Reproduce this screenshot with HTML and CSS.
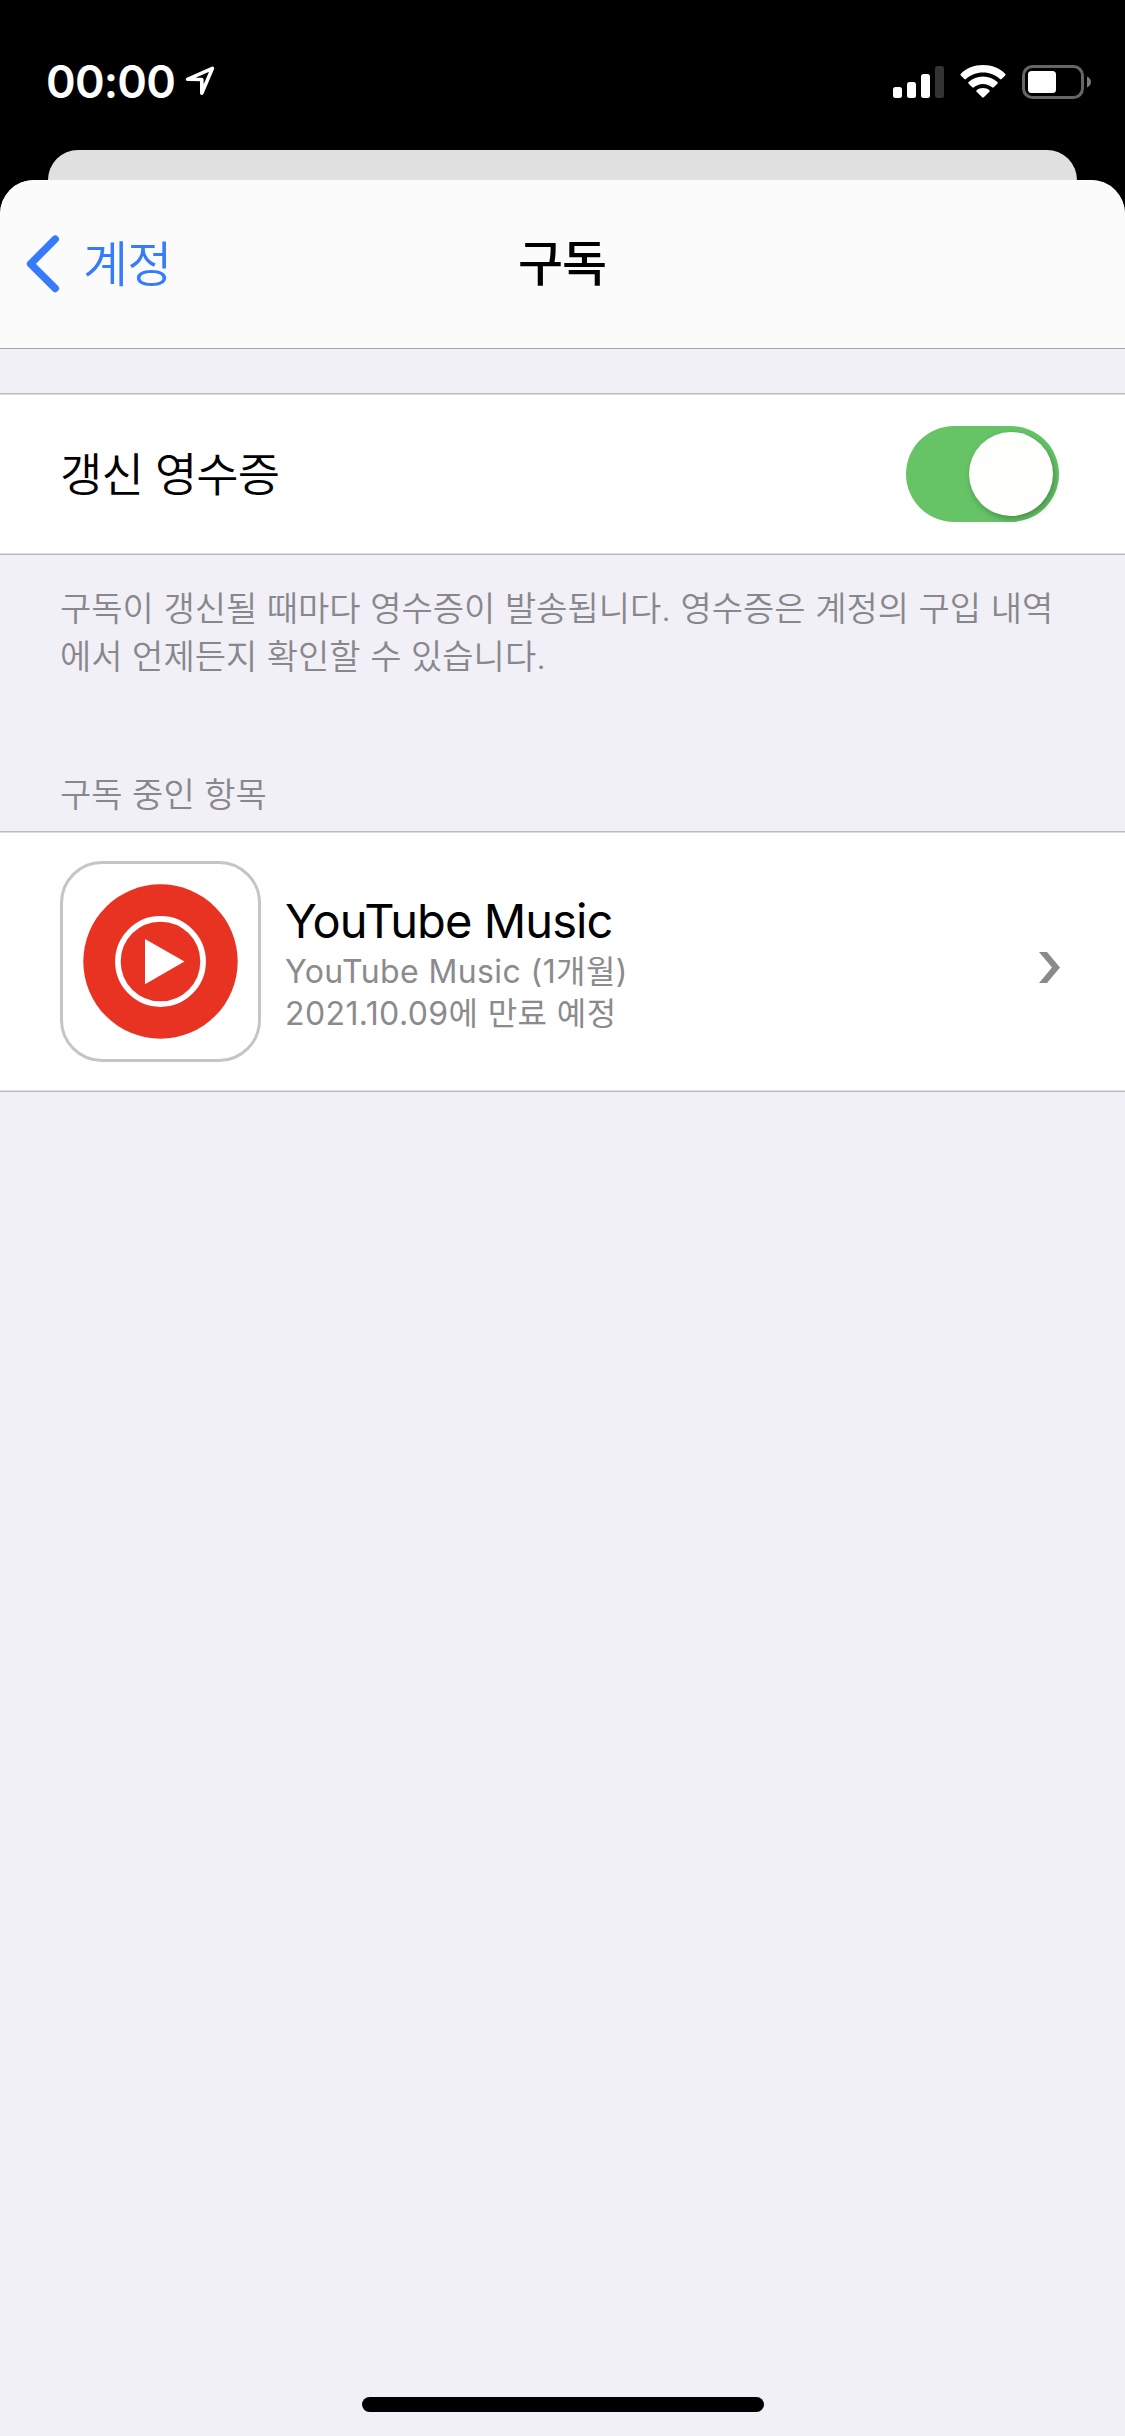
FILE: index.html
```html
<!DOCTYPE html>
<html lang="ko">
<head>
<meta charset="utf-8">
<title>구독</title>
<link rel="stylesheet" href="styles.css">
</head>
<body>
<div class="phone">
  <header class="status">
    <span class="time">00:00</span>
    <svg class="location" width="32" height="32" viewBox="0 0 32 32"><path d="M3.500 14.300 28.400 3.400 17.800 28.200V14.500Z"/></svg>
    <div class="indicators">
      <svg class="signal" width="51" height="34" viewBox="0 0 51 34">
        <rect x="0" y="22" width="9" height="11" rx="2.5"/>
        <rect x="14" y="17" width="9" height="16" rx="2.5"/>
        <rect x="28" y="9" width="9" height="24" rx="2.5"/>
        <rect class="dim" x="42" y="1" width="9" height="32" rx="2.5"/>
      </svg>
      <svg class="wifi" width="46" height="34" viewBox="0 0 46 34">
        <path d="M23 0C31.800 0 39.700 3.300 45.200 8.700Q46 9.500 45.200 10.400L41.600 14Q40.800 14.800 40 14C35.500 9.900 29.600 7.500 23 7.500S10.500 9.900 6 14Q5.200 14.800 4.400 14L.8 10.400Q0 9.500 .8 8.700C6.300 3.300 14.200 0 23 0Z"/>
        <path d="M23 11.500C28.600 11.500 33.600 13.600 37.400 17.100Q38.200 17.900 37.400 18.700L33.700 22.300Q32.900 23.100 32.100 22.300C29.700 20.200 26.500 18.900 23 18.900S16.300 20.200 13.900 22.300Q13.100 23.100 12.300 22.300L8.600 18.700Q7.800 17.900 8.600 17.100C12.400 13.600 17.400 11.500 23 11.500Z"/>
        <path d="M23 22.900C25.500 22.900 27.700 23.700 29.400 25.200Q30.200 26 29.400 26.800L23.800 32.300Q23 33.100 22.200 32.300L16.600 26.800Q15.800 26 16.600 25.200C18.300 23.700 20.500 22.900 23 22.900Z"/>
      </svg>
      <svg class="battery" width="70" height="34" viewBox="0 0 70 34">
        <rect class="shell" x="1.500" y="1.500" width="59" height="31" rx="9"/>
        <rect class="charge" x="6" y="6" width="28" height="22" rx="3.500"/>
        <path class="cap" d="M65 11.500C67.500 12.500 69 14.500 69 17S67.500 21.500 65 22.500Z"/>
      </svg>
    </div>
  </header>
  <div class="backdrop-card"></div>
  <main class="sheet">
    <nav class="navbar">
      <div class="back">
        <svg width="34" height="58" viewBox="0 0 34 58"><path d="M29.200 4.200 4.600 28.800 29.200 53.400"/></svg>
        <span>계정</span>
      </div>
      <h1 class="title">구독</h1>
    </nav>
    <section class="group">
      <div class="row toggle-row">
        <span class="label">갱신 영수증</span>
        <div class="switch"><div class="knob"></div></div>
      </div>
      <p class="note">구독이 갱신될 때마다 영수증이 발송됩니다. 영수증은 계정의 구입 내역<br>에서 언제든지 확인할 수 있습니다.</p>
    </section>
    <section class="group">
      <h2 class="caption">구독 중인 항목</h2>
      <div class="row app-row">
        <div class="app-icon">
          <svg width="155" height="155" viewBox="-77.500 -77.500 155 155">
            <circle class="disc" r="77.200"/>
            <circle class="ring" r="42.600"/>
            <path class="play" d="M-15.500-22.600 24-0 -15.500 22.800Z"/>
          </svg>
        </div>
        <div class="details">
          <div class="app-name">YouTube Music</div>
          <div class="plan">YouTube Music (1개월)</div>
          <div class="expiry">2021.10.09에 만료 예정</div>
        </div>
        <svg class="disclosure" width="21" height="31" viewBox="0 0 21 31"><path d="M0 0H8L21 15.500 8 31H0L13 15.500Z"/></svg>
      </div>
    </section>
    <div class="home-indicator"></div>
  </main>
</div>
</body>
</html>
```
FILE: styles.css
```css
* { box-sizing: border-box; }

body {
  margin: 0;
  background: #000;
  font-family: Inter, "Noto Sans CJK KR", sans-serif;
  color: #000;
}

.phone {
  width: 1125px;
  height: 2436px;
  display: flex;
  flex-direction: column;
  overflow: hidden;
}

.status {
  height: 150px;
  padding: 65px 33px 0 46px;
  display: flex;
  align-items: flex-start;
  color: #fff;
}

.time {
  font-size: 45px;
  font-weight: 600;
  line-height: 34px;
  letter-spacing: -0.8px;
  white-space: nowrap;
}

.location {
  margin: 0 0 0 9px;
  fill: none;
  stroke: #fff;
  stroke-width: 3.6;
  stroke-linejoin: round;
}

.indicators {
  display: flex;
  margin-left: auto;
}

.signal, .wifi { fill: #fff; }
.signal .dim { fill: #333; }
.wifi { margin-left: 16px; }
.battery { margin-left: 16px; }
.shell { fill: none; stroke: #666; stroke-width: 3; }
.charge { fill: #fff; }
.cap { fill: #7a7a7a; }

.backdrop-card {
  height: 30px;
  margin: 0 48px;
  border-radius: 30px 30px 0 0;
  background: #e0e0e0;
}

.sheet {
  flex: 1;
  display: flex;
  flex-direction: column;
  border-radius: 34px 34px 0 0;
  background: #f1f0f6;
  overflow: hidden;
}

.navbar {
  height: 169px;
  display: grid;
  grid-template-columns: 1fr auto 1fr;
  align-items: center;
  padding: 0 26px;
  border-bottom: 1px solid #a8a8aa;
  background: #fbfbfc;
}

.back {
  display: flex;
  align-items: center;
  gap: 23px;
  color: #367bf7;
  font-size: 49px;
  font-weight: 350;
  line-height: 60px;
  letter-spacing: -0.8px;
}

.back span { padding-top: 1px; }

.back svg {
  fill: none;
  stroke: #367bf7;
  stroke-width: 7.5;
  stroke-linecap: round;
  stroke-linejoin: round;
}

.title {
  margin: 0 1px 0 0;
  font-size: 49px;
  line-height: 60px;
  font-weight: 500;
  letter-spacing: -1px;
}

.group { display: flex; flex-direction: column; }

.row {
  display: flex;
  align-items: center;
  background: #fff;
  border-top: 1px solid #bcbcbe;
  border-bottom: 1px solid #bcbcbe;
  box-shadow: inset 0 1px #dededf, inset 0 -1px #dededf;
}

.toggle-row {
  height: 162px;
  margin-top: 44px;
  padding: 0 66px 0 60px;
  justify-content: space-between;
}

.label {
  font-size: 46px;
  font-weight: 350;
  line-height: 60px;
  letter-spacing: -0.9px;
}

.switch {
  width: 153px;
  height: 96px;
  padding: 6px;
  display: flex;
  justify-content: flex-end;
  border-radius: 48px;
  background: #66c467;
}

.knob {
  width: 84px;
  height: 84px;
  border-radius: 50%;
  background: #fefefc;
  box-shadow: 2px 3px 7px rgba(0, 0, 0, 0.28);
}

.note {
  margin: 30px 0 0;
  padding: 0 60px;
  color: #88878c;
  font-size: 34px;
  font-weight: 350;
  line-height: 48px;
  white-space: nowrap;
}

.caption {
  margin: 90px 0 0;
  padding: 0 60px;
  height: 60px;
  color: #88878c;
  font-size: 34px;
  font-weight: 350;
  line-height: 48px;
}

.app-row {
  height: 261px;
  padding: 0 65px 0 60px;
}

.app-icon {
  width: 201px;
  height: 201px;
  display: grid;
  place-items: center;
  border: 3px solid #c5c5c5;
  border-radius: 42px;
}

.disc { fill: #e83323; }
.ring { fill: none; stroke: #fff; stroke-width: 5.6; }
.play { fill: #fff; }

.details { padding-left: 24px; margin-top: 3px; white-space: nowrap; }

.app-name {
  height: 59px;
  font-size: 47px;
  line-height: 57px;
  letter-spacing: -0.9px;
}

.plan, .expiry {
  color: #8b8b8d;
  font-size: 32px;
  line-height: 42px;
  letter-spacing: 0.4px;
}

.disclosure { margin: 12px 0 0 auto; fill: #8a8a8c; }

.home-indicator {
  width: 402px;
  height: 15px;
  margin: auto auto 24px;
  border-radius: 8px;
  background: #000;
}
```
